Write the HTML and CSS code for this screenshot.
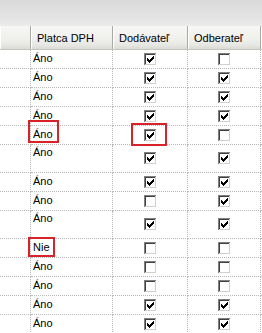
FILE: index.html
```html
<!DOCTYPE html>
<html lang="sk">
<head>
    <meta charset="UTF-8">
    <title>Zoznam firiem</title>
    <link rel="stylesheet" href="styles.css">
</head>
<body>
    <svg class="defs" width="0" height="0" aria-hidden="true">
        <symbol id="box" viewBox="0 0 13 13">
            <rect width="13" height="13" fill="#fff"/>
            <path d="M0 0h12v1H1v11H0z" fill="#808080"/>
            <path d="M1 1h10v1H2v9H1z" fill="#404040"/>
            <path d="M1 11h10V1h1v11H1z" fill="#d4d0c8"/>
            <rect x="2" y="2" width="9" height="9" fill="#fff"/>
        </symbol>
        <symbol id="tick" viewBox="0 0 13 13">
            <use href="#box"/>
            <path d="M3 5h1v3H3zM4 6h1v3H4zM5 7h1v3H5zM6 6h1v3H6zM7 5h1v3H7zM8 4h1v3H8zM9 3h1v3H9z" fill="#000"/>
        </symbol>
    </svg>

    <div class="toolbar"></div>

    <div class="list">
        <div class="row head">
            <div class="col"></div>
            <div class="col">Platca DPH</div>
            <div class="col">Dodávateľ</div>
            <div class="col">Odberateľ</div>
            <div class="col last"></div>
        </div>
        <div id="rows"></div>

        <div class="mark mark-1"></div>
        <div class="mark mark-2"></div>
        <div class="mark mark-3"></div>
    </div>

    <script>
        // platca, dodavatel, odberatel, vysoky riadok
        const data = [
            ['Áno', 1, 0, 0],
            ['Áno', 1, 1, 0],
            ['Áno', 1, 1, 0],
            ['Áno', 1, 1, 0],
            ['Áno', 1, 0, 0],
            ['Áno', 1, 1, 1],
            ['Áno', 1, 1, 0],
            ['Áno', 0, 1, 0],
            ['Áno', 1, 1, 1],
            ['Nie', 0, 0, 0],
            ['Áno', 0, 0, 0],
            ['Áno', 0, 0, 0],
            ['Áno', 1, 1, 0],
            ['Áno', 1, 1, 0]
        ];

        function checkbox(on) {
            return '<svg class="cb" width="13" height="13"><use href="#' + (on ? 'tick' : 'box') + '"/></svg>';
        }

        let html = '';
        data.forEach(function (r) {
            html += '<div class="row' + (r[3] ? ' tall' : '') + '">' +
                '<div class="cell"></div>' +
                '<div class="cell text">' + r[0] + '</div>' +
                '<div class="cell check">' + checkbox(r[1]) + '</div>' +
                '<div class="cell check">' + checkbox(r[2]) + '</div>' +
                '<div class="cell last"></div>' +
                '</div>';
        });
        document.getElementById('rows').innerHTML = html;
    </script>
</body>
</html>
```

FILE: styles.css
```css
* {
    box-sizing: border-box;
}

body {
    margin: 0;
    background-color: #fff;
    font-family: "Liberation Sans", Arial, sans-serif;
    font-size: 11px;
    color: #000;
    overflow: hidden;
}

.defs {
    position: absolute;
    width: 0;
    height: 0;
}

.toolbar {
    height: 26px;
    background: linear-gradient(#dadada, #e6e6e6 80%, #ececec);
}

.list {
    position: relative;
}

.row {
    display: grid;
    grid-template-columns: 31px 82px 75px 73px 1fr;
    height: 19px;
}

.row.tall {
    height: 28px;
}

.head {
    height: 24px;
    background: linear-gradient(#f7f7f5, #efefec 60%, #e6e6e2 85%, #d9d9d4);
    border-bottom: 1px solid #c6c6c0;
}

.head .col {
    padding: 6px 0 0 6px;
    line-height: 13px;
    white-space: nowrap;
    border-right: 1px solid #a9a9a4;
    box-shadow: inset 1px 0 #fff;
}

.head .col.last {
    border-right: none;
}

.cell {
    border-right: 1px dotted #b9b9b9;
    border-bottom: 1px dotted #b9b9b9;
    line-height: 13px;
}

.cell.last {
    border-right: none;
}

.cell.text {
    padding: 2px 0 0 2px;
}

.tall .cell.text {
    padding-top: 1px;
}

.cell.check {
    display: flex;
    justify-content: center;
    align-items: center;
    padding-left: 1px;
}

.cb {
    display: block;
    shape-rendering: crispEdges;
}

.mark {
    position: absolute;
    border: 2px solid #d8232b;
}

.mark-1 {
    left: 28px;
    top: 94px;
    width: 31px;
    height: 23px;
}

.mark-2 {
    left: 131px;
    top: 97px;
    width: 36px;
    height: 23px;
}

.mark-3 {
    left: 28px;
    top: 211px;
    width: 27px;
    height: 20px;
}
```
